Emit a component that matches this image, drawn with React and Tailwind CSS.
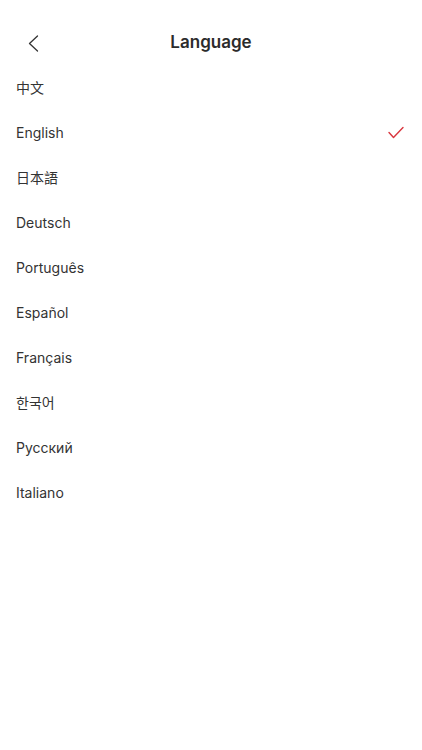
import React, { useState } from 'react';

const languages = ['中文', 'English', '日本語', 'Deutsch', 'Português', 'Español', 'Français', '한국어', 'Русский', 'Italiano'];

const App = () => {
  const [selected, setSelected] = useState('English');

  return (
    <div
      className="w-[422px] h-[750px] bg-white text-[#333333]"
      style={{ fontFamily: 'Inter, "Noto Sans CJK SC", "Noto Sans CJK KR", sans-serif' }}
    >
      {/* header */}
      <div className="pt-[21px]">
        <div className="h-[44px] flex items-center relative">
          <button className="absolute left-[21px] top-[10px] w-6 h-6 flex items-center justify-center">
            <svg width="11" height="17" viewBox="0 0 11 17" fill="none">
              <path d="M9.5 1 L1.5 8.5 L9.5 16" stroke="#333" strokeWidth="1.3" strokeLinecap="round" strokeLinejoin="round" />
            </svg>
          </button>
          <h1 className="w-full text-center text-[17px] font-semibold text-[#2b2b2b]">Language</h1>
        </div>
      </div>

      {/* list */}
      <div>
        {languages.map((lang) => (
          <div
            key={lang}
            onClick={() => setSelected(lang)}
            className="h-[45px] flex items-center justify-between pl-4 pr-[18px]"
          >
            <span className="text-[14px]">{lang}</span>
            {selected === lang && (
              <svg width="16" height="13" viewBox="0 0 16 13" fill="none">
                <path d="M1 6.5 L5.5 11.5 L15 1.5" stroke="#d9363e" strokeWidth="1.4" strokeLinecap="round" strokeLinejoin="round" />
              </svg>
            )}
          </div>
        ))}
      </div>
    </div>
  );
};

export default App;
